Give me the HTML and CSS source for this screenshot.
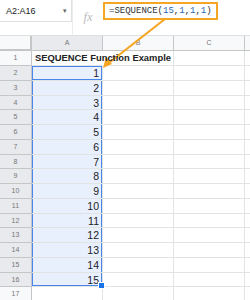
FILE: index.html
```html
<!DOCTYPE html>
<html lang="en">
<head>
<meta charset="UTF-8">
<title>SEQUENCE Function Example</title>
<link rel="stylesheet" href="styles.css">
</head>
<body>
<div class="page">
    <div class="bar">
        <div class="namebox">
            <span>A2:A16</span>
            <span class="drop">&#9662;</span>
        </div>
        <div class="fx">fx</div>
        <div class="formula">
            <span>=SEQUENCE(<b>15</b>,<b>1</b>,<b>1</b>,<b>1</b>)</span>
        </div>
    </div>

    <div class="sheet">
        <div class="corner"></div>
        <div class="colhead on">A</div>
        <div class="colhead">B</div>
        <div class="colhead">C</div>
        <div class="colhead edge"></div>

        <div class="rowhead">1</div>
        <div class="cell title">SEQUENCE Function Example</div>
        <div class="cell"></div><div class="cell"></div><div class="cell edge"></div>

        <div class="rowhead on">2</div>
        <div class="cell num sel first">1</div>
        <div class="cell"></div><div class="cell"></div><div class="cell edge"></div>

        <div class="rowhead on">3</div>
        <div class="cell num sel">2</div>
        <div class="cell"></div><div class="cell"></div><div class="cell edge"></div>

        <div class="rowhead on">4</div>
        <div class="cell num sel">3</div>
        <div class="cell"></div><div class="cell"></div><div class="cell edge"></div>

        <div class="rowhead on">5</div>
        <div class="cell num sel">4</div>
        <div class="cell"></div><div class="cell"></div><div class="cell edge"></div>

        <div class="rowhead on">6</div>
        <div class="cell num sel">5</div>
        <div class="cell"></div><div class="cell"></div><div class="cell edge"></div>

        <div class="rowhead on">7</div>
        <div class="cell num sel">6</div>
        <div class="cell"></div><div class="cell"></div><div class="cell edge"></div>

        <div class="rowhead on">8</div>
        <div class="cell num sel">7</div>
        <div class="cell"></div><div class="cell"></div><div class="cell edge"></div>

        <div class="rowhead on">9</div>
        <div class="cell num sel">8</div>
        <div class="cell"></div><div class="cell"></div><div class="cell edge"></div>

        <div class="rowhead on">10</div>
        <div class="cell num sel">9</div>
        <div class="cell"></div><div class="cell"></div><div class="cell edge"></div>

        <div class="rowhead on">11</div>
        <div class="cell num sel">10</div>
        <div class="cell"></div><div class="cell"></div><div class="cell edge"></div>

        <div class="rowhead on">12</div>
        <div class="cell num sel">11</div>
        <div class="cell"></div><div class="cell"></div><div class="cell edge"></div>

        <div class="rowhead on">13</div>
        <div class="cell num sel">12</div>
        <div class="cell"></div><div class="cell"></div><div class="cell edge"></div>

        <div class="rowhead on">14</div>
        <div class="cell num sel">13</div>
        <div class="cell"></div><div class="cell"></div><div class="cell edge"></div>

        <div class="rowhead on">15</div>
        <div class="cell num sel">14</div>
        <div class="cell"></div><div class="cell"></div><div class="cell edge"></div>

        <div class="rowhead on">16</div>
        <div class="cell num sel last">15<span class="handle"></span></div>
        <div class="cell"></div><div class="cell"></div><div class="cell edge"></div>

        <div class="rowhead">17</div>
        <div class="cell"></div>
        <div class="cell"></div><div class="cell"></div><div class="cell edge"></div>
    </div>

    <!-- callout arrow from the formula to A2 -->
    <svg class="arrow" width="250" height="300" viewBox="0 0 250 300">
        <line x1="165" y1="19" x2="110" y2="62" stroke="#f5a623" stroke-width="2.2"/>
        <polygon points="103,68 106,57 112,64" fill="#f5a623"/>
    </svg>
</div>
</body>
</html>
```

FILE: styles.css
```css
body {
    margin: 0;
    padding: 0;
    background: #fff;
    font-family: "Liberation Sans", Arial, sans-serif;
    color: #222;
}
.page {
    position: relative;
    width: 250px;
    height: 300px;
    overflow: hidden;
}

/* name box + formula bar */
.bar {
    display: flex;
    height: 36px;
    border-bottom: 1px solid #e0e0e0;
    box-sizing: border-box;
}
.namebox {
    width: 72px;
    height: 22px;
    display: flex;
    align-items: center;
    justify-content: space-between;
    padding: 0 4px 0 6px;
    box-sizing: border-box;
    border-bottom: 1px solid #e0e0e0;
    border-right: 1px solid #e0e0e0;
    font-size: 9px;
    color: #222;
}
.drop {
    font-size: 7px;
    color: #666;
}
.fx {
    width: 30px;
    padding-top: 10px;
    text-align: center;
    font-family: "Liberation Serif", serif;
    font-style: italic;
    font-size: 12.5px;
    color: #bbb;
    border-left: 1px solid #ececec;
}
.formula {
    margin-top: 2px;
    width: 115px;
    height: 18px;
    border: 2px solid #f5a623;
    box-sizing: border-box;
    display: flex;
    align-items: center;
    padding-left: 4px;
    font-family: "Liberation Mono", monospace;
    font-size: 9px;
    color: #333;
}
.formula b {
    font-weight: normal;
    color: #2a6bb5;
}

/* grid */
.sheet {
    display: grid;
    grid-template-columns: 32px 71px 71px 71px 5px;
    grid-template-rows: 15px 15px repeat(16, 14.77px);
}
.corner {
    background: #f8f9fa;
    border-right: 2px solid #c4c7c5;
    border-bottom: 2px solid #c4c7c5;
    box-sizing: border-box;
}
.colhead {
    background: #f8f9fa;
    border-right: 1px solid #c4c7c5;
    border-bottom: 1px solid #c4c7c5;
    box-sizing: border-box;
    font-size: 7px;
    color: #777;
    text-align: center;
    line-height: 14px;
}
.rowhead {
    background: #f8f9fa;
    border-right: 1px solid #c4c7c5;
    border-bottom: 1px solid #c4c7c5;
    box-sizing: border-box;
    font-size: 7px;
    color: #777;
    text-align: center;
    line-height: 14px;
}
.colhead.on,
.rowhead.on {
    background: #e8eaed;
}
.cell {
    border-right: 1px solid #e2e3e3;
    border-bottom: 1px solid #e2e3e3;
    box-sizing: border-box;
    font-size: 10.5px;
    line-height: 14px;
    white-space: nowrap;
}
.edge {
    border-right: none;
}
.title {
    font-weight: bold;
    font-size: 9.4px;
    padding-left: 3px;
    overflow: visible;
    border-right-color: transparent;
    position: relative;
    z-index: 1;
}
.num {
    text-align: right;
    padding-right: 3px;
}
.sel {
    background: #e8f0fe;
    box-shadow: inset 1px 0 #4a86e8, inset -1px 0 #4a86e8;
}
.sel.first {
    box-shadow: inset 1px 1px #4a86e8, inset -1px -1px #4a86e8;
}
.sel.last {
    position: relative;
    box-shadow: inset 1px 0 #4a86e8, inset -1px -1px #4a86e8;
}
.handle {
    position: absolute;
    right: -3px;
    bottom: -3px;
    width: 5px;
    height: 5px;
    background: #1a73e8;
    border: 1px solid #fff;
}

.arrow {
    position: absolute;
    left: 0;
    top: 0;
    pointer-events: none;
}
```
